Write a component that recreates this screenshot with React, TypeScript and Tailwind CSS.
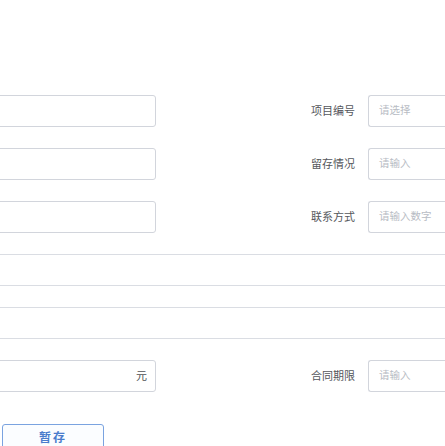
export default function App() {
  const font = { fontFamily: '"Liberation Sans", "Noto Sans CJK SC", sans-serif' }

  const sideRow = (label: string, placeholder: string, suffix?: string) => (
    <div className="flex h-8 items-center">
      <div className="-ml-[15px] flex h-8 w-[171px] shrink-0 items-center justify-end rounded-[3px] border border-[#d2d5dc] bg-white pr-[8px]">
        {suffix && <span className="text-[11px] text-[#505256]">{suffix}</span>}
      </div>
      <div className="flex-1" />
      <span className="mr-[13px] text-[11px] text-[#55575c]">{label}</span>
      <div className="-mr-[43px] flex h-8 w-[120px] shrink-0 items-center rounded-l-[3px] border border-r-0 border-[#d2d5dc] bg-white pl-[10px]">
        <span className="text-[10.5px] text-[#b8bcc4]">{placeholder}</span>
      </div>
    </div>
  )

  const wideRow = (
    <div className="-mx-5 h-8 border-y border-[#dadde3] bg-white" />
  )

  return (
    <div className="h-[446px] w-[445px] overflow-hidden bg-white" style={font}>
      <div className="flex flex-col gap-[21px] pt-[95px]">
        {sideRow('项目编号', '请选择')}
        {sideRow('留存情况', '请输入')}
        {sideRow('联系方式', '请输入数字')}
        {wideRow}
        {wideRow}
        {sideRow('合同期限', '请输入', '元')}
      </div>
      <div className="mt-[32px] pl-[2px]">
        <button className="flex h-7 w-[102px] items-center justify-center rounded-[3px] border border-[#7aa3e0] bg-[#fbfdff] text-[12px] font-bold tracking-[2px] text-[#4a7ccc]">
          暂存
        </button>
      </div>
    </div>
  )
}
